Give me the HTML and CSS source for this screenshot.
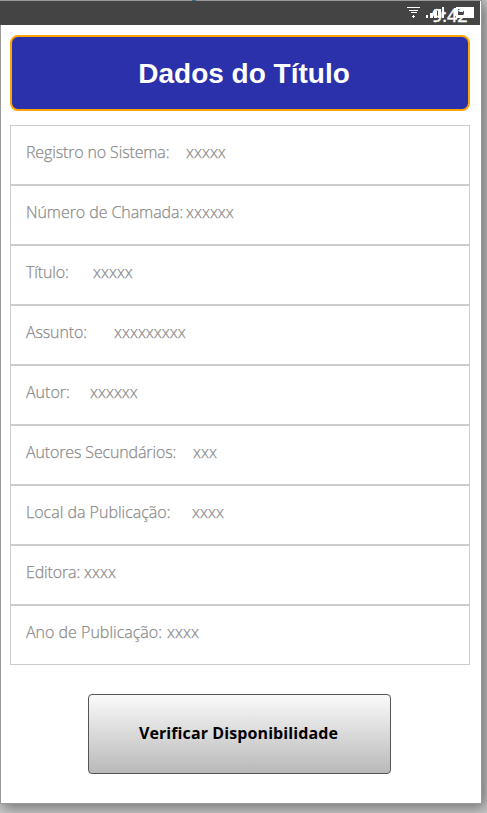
FILE: index.html
```
<!DOCTYPE html>
<html lang="pt-BR">
<head>
<meta charset="utf-8">
<title>Dados do Título</title>
<link rel="stylesheet" href="styles.css">
</head>
<body>
<main class="phone">
  <i class="mark"></i>
  <header class="status">
    <svg class="status-icons" width="70" height="22" viewBox="0 0 70 22" shape-rendering="crispEdges" aria-hidden="true">
      <path fill="#fff" d="M0 6h13v1H0zM2 9h9v1H2zM4 11h6v1H4zM6 14h1v3H6zM5 15h3v1H5z"/>
      <path fill="#fff" d="M19 14h2v3h-2zM23 12h3v5h-3zM27 10h3v7h-3zM31 8h3v9h-3zM35 6h2v11h-2z"/>
      <path fill="#fff" fill-rule="evenodd" d="M47 7h2V6h18v11H49v-2h-2zM51 8v6h6V8zM53 9h3v2h-3z"/>
    </svg>
    <span class="clock">9:42</span>
  </header>
  <h1 class="title">Dados do Título</h1>
  <dl class="fields">
    <div class="field"><dt class="w160 tight">Registro no Sistema:</dt><dd>xxxxx</dd></div>
    <div class="field"><dt class="w160 snug">Número de Chamada:</dt><dd>xxxxxx</dd></div>
    <div class="field"><dt class="w67 tight">Título:</dt><dd>xxxxx</dd></div>
    <div class="field"><dt class="w88 tight">Assunto:</dt><dd>xxxxxxxxx</dd></div>
    <div class="field"><dt class="w64">Autor:</dt><dd>xxxxxx</dd></div>
    <div class="field"><dt class="w167 tight">Autores Secundários:</dt><dd>xxx</dd></div>
    <div class="field"><dt class="w166">Local da Publicação:</dt><dd>xxxx</dd></div>
    <div class="field"><dt class="w58 tight">Editora:</dt><dd>xxxx</dd></div>
    <div class="field"><dt class="w141">Ano de Publicação:</dt><dd>xxxx</dd></div>
  </dl>
  <button class="check">Verificar Disponibilidade</button>
</main>
</body>
</html>
```
FILE: styles.css
```
* { box-sizing: border-box; }
body { margin: 0; height: 813px; padding-top: 1px; overflow: hidden; background: #ccc; }
.phone {
  position: relative;
  width: 480px; height: 802px; margin: 0 0 0 1px; background: #fff;
  display: flex; flex-direction: column; align-items: flex-start;
  box-shadow: 0 0 0 1px #999, 3px 3px 14px 2px #707070;
}
.mark { position: absolute; left: 191px; top: -1px; width: 4px; height: 1px; background: #2f6f86; }
.status { position: relative; width: 481px; height: 24px; background: #444; margin-left: -1px; border-right: 1px solid #fff; padding-left: 407px; }
.status-icons { display: block; }
.clock { position: absolute; left: 432px; top: 4px; color: #fff; font: 18px/20px "Open Sans", sans-serif; -webkit-text-stroke: 0.4px #fff; }
.title {
  width: 460px; height: 76px; margin: 10px 0 0 9px; padding-left: 8px; border: 2px solid #ffa500; border-radius: 8px;
  background: #2a31aa; color: #fff; text-align: center; font: bold 28px/73px "Liberation Sans", sans-serif;
}
.fields { width: 460px; margin: 14px 0 0 9px; }
.field {
  height: 60px; display: flex; border: 1px solid #ccc; padding: 0 15px;
  color: #8c8c8c; font: 300 16px/53px "Open Sans", sans-serif; white-space: nowrap;
  -webkit-text-stroke: 0.25px #8c8c8c;
}
dt { flex: none; }
dd { margin: 0; }
.tight { letter-spacing: -0.14px; }
.snug { letter-spacing: -0.07px; }
.w160 { width: 160px; }
.w67 { width: 67px; }
.w88 { width: 88px; }
.w64 { width: 64px; }
.w167 { width: 167px; }
.w166 { width: 166px; }
.w58 { width: 58px; }
.w141 { width: 141px; }
.check {
  width: 303px; height: 80px; margin: 29px 0 0 87px; padding: 0 2px 2px 0; border: 1px solid #555; border-radius: 4px;
  background: linear-gradient(#fafafa, #b9b9b9); color: #000; font: bold 16px "Open Sans", sans-serif; letter-spacing: 0.1px;
}
```
